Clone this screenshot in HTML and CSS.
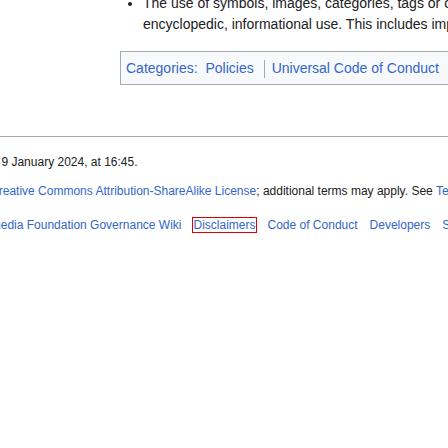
FILE: index.html
```html
<!DOCTYPE html>
<html lang="en">
<head>
<meta charset="utf-8">
<title>Universal Code of Conduct</title>
<link rel="stylesheet" href="styles.css">
</head>
<body>
<div class="page">
  <div class="content">
    <ul class="bullets">
      <li>The use of symbols, images, categories, tags or other kinds of content that are intimidating or harmful to others outside of the context of<br>encyclopedic, informational use. This includes imposing schemes on content intended to marginalize or ostracize.</li>
    </ul>
    <div class="catlinks">
      <a href="#" class="cat-label">Categories:</a>
      <ul class="cat-list">
        <li><a href="#">Policies</a></li>
        <li><a href="#">Universal Code of Conduct</a></li>
      </ul>
    </div>
  </div>
  <footer class="footer">
    <p class="info line-edited">This page was last edited on 9 January 2024, at 16:45.</p>
    <p class="info line-license">Text is available under the <a href="#">Creative Commons Attribution-ShareAlike License</a>; additional terms may apply. See <a href="#">Terms of Use</a> for details.</p>
    <ul class="places">
      <li><a href="#">Privacy policy</a></li>
      <li><a href="#">About Wikimedia Foundation Governance Wiki</a></li>
      <li><a href="#" class="focused">Disclaimers</a></li>
      <li><a href="#">Code of Conduct</a></li>
      <li><a href="#">Developers</a></li>
      <li><a href="#">Statistics</a></li>
    </ul>
  </footer>
</div>
</body>
</html>
```
FILE: styles.css
```css
html, body {
  margin: 0;
  padding: 0;
  background: #ffffff;
}
body {
  font-family: "Liberation Sans", Arial, sans-serif;
  color: #202122;
  overflow: hidden;
  width: 448px;
  height: 448px;
}
a {
  color: #3366cc;
  text-decoration: none;
}
.page {
  width: 448px;
  overflow: hidden;
}
.content {
  padding-left: 120px;
  width: 1000px;
}
.bullets {
  margin: -7.35px 0 0 0;
  padding: 0 0 0 23px;
  font-size: 14px;
  line-height: 21px;
  list-style: disc;
  white-space: nowrap;
}
.catlinks {
  margin-top: 16.35px;
  border: 1px solid #a2a9b1;
  background: #f8f9fa;
  padding: 5px;
  font-size: 14px;
  line-height: 22.4px;
  white-space: nowrap;
}
.cat-list {
  display: inline;
  margin: 0;
  padding: 0;
  list-style: none;
}
.cat-list li {
  display: inline-block;
  line-height: 17.5px;
  border-left: 1px solid #a2a9b1;
  padding: 0 6px 0 7px;
}
.cat-list li:first-child {
  border-left: none;
  padding-left: 4px;
}
.footer {
  margin-top: 50.6px;
  border-top: 1px solid #a2a9b1;
  padding-top: 17.2px;
  font-size: 12px;
  line-height: 16.8px;
  white-space: nowrap;
}
.info {
  margin: 0;
}
.line-edited {
  margin-left: -154px;
}
.line-license {
  margin-top: 11.6px;
  margin-left: -152px;
}
.places {
  list-style: none;
  margin: 17.2px 0 0 -152px;
  padding: 0;
  display: flex;
  gap: 12px;
}
.places li {
  flex: none;
}
.focused {
  outline: 1px solid #dd0000;
  outline-offset: 0;
}
```
